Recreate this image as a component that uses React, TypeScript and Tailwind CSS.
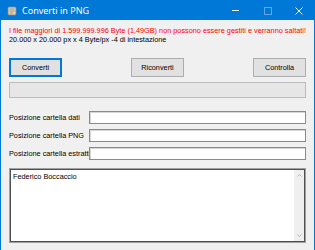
import React from "react";

const F = { fontFamily: '"Liberation Sans", Arial, sans-serif' };

function Btn({ label, focused }: { label: string; focused?: boolean }) {
  return (
    <div
      className={
        "w-[53px] h-[19px] flex items-center justify-center text-[7.3px] leading-none text-black bg-[#e1e1e1] " +
        (focused ? "border-2 border-[#0078d7]" : "border border-[#adadad]")
      }
    >
      {label}
    </div>
  );
}

function Field({ label }: { label: string }) {
  return (
    <div className="flex items-center h-[13px]">
      <div className="w-[80px] text-[7.3px] text-black whitespace-nowrap leading-none">{label}</div>
      <div className="flex-1 h-[13px] bg-white border border-[#8a8a8a] shadow-[inset_1px_1px_0_#d6d6d6]" />
    </div>
  );
}

export default function App() {
  return (
    <div className="w-[315px] h-[250px] bg-[#0078d7] px-px pt-px flex flex-col" style={F}>
      <div className="h-[19px] flex items-center text-white shrink-0">
        <svg width="10" height="10" viewBox="0 0 10 10" className="ml-[6px]">
          <path d="M1 2 Q1 1 2 1 L8 1 Q9 1 9 2 L9 8 Q9 9 8 9 L2 9 Q1 9 1 8 Z" fill="#d9d3bf" stroke="#8d8673" strokeWidth="0.8" />
          <path d="M2.5 3 L7.5 3 M2.5 5 L7.5 5 M2.5 7 L6 7" stroke="#9a927e" strokeWidth="0.8" />
        </svg>
        <span className="ml-[5px] text-[9px] leading-none" style={{ fontFamily: '"Noto Sans", sans-serif' }}>
          Converti in PNG
        </span>
        <div className="ml-auto flex items-center h-full">
          <div className="w-[7px] h-px bg-white mr-[25px]" />
          <div className="w-[8px] h-[8px] border border-[#5fa8ea] mr-[23px]" />
          <svg width="8" height="8" viewBox="0 0 8 8" className="mr-[11px]">
            <path d="M0.5 0.5 L7.5 7.5 M7.5 0.5 L0.5 7.5" stroke="white" strokeWidth="0.9" />
          </svg>
        </div>
      </div>
      <div className="flex-1 bg-[#f0f0f0] flex flex-col pl-[8px] pr-[8px]">
        <div className="mt-[6px] text-[7.3px] leading-[9px] text-[#ff0000] whitespace-nowrap">
          I file maggiori di 1.599.999.996 Byte (1,49GB) non possono essere gestiti e verranno saltati!
        </div>
        <div className="text-[7.3px] leading-[9px] text-black whitespace-nowrap">
          20.000 x 20.000 px x 4 Byte/px -4 di intestazione
        </div>
        <div className="mt-[14px] flex justify-between">
          <Btn label="Converti" focused />
          <Btn label="Riconverti" />
          <Btn label="Controlla" />
        </div>
        <div className="mt-[5px] h-[16px] bg-[#e6e6e6] border border-[#bcbcbc]" />
        <div className="mt-[13px] flex flex-col gap-[5px]">
          <Field label="Posizione cartella dati" />
          <Field label="Posizione cartella PNG" />
          <Field label="Posizione cartella estratti" />
        </div>
        <div className="mt-[8px] h-[75px] bg-white border border-[#a0a0a0] flex">
          <div className="flex-1 flex border border-[#505050]">
            <div className="flex-1 pl-[2px] pt-[2px] text-[7.3px] leading-[9px] text-black">Federico Boccaccio</div>
            <div className="w-[10px] bg-[#efefef] flex flex-col items-center justify-between py-[4px]">
              <svg width="5" height="3" viewBox="0 0 5 3">
                <path d="M0.5 2.5 L2.5 0.5 L4.5 2.5" stroke="#a6a6a6" strokeWidth="0.8" fill="none" />
              </svg>
              <svg width="5" height="3" viewBox="0 0 5 3">
                <path d="M0.5 0.5 L2.5 2.5 L4.5 0.5" stroke="#a6a6a6" strokeWidth="0.8" fill="none" />
              </svg>
            </div>
          </div>
        </div>
      </div>
    </div>
  );
}
